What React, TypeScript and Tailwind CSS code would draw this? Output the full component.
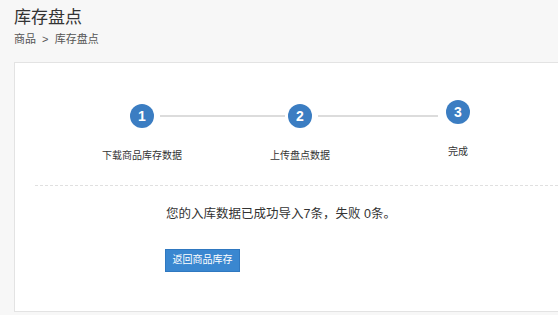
import React from "react";

export default function App() {
  const font = { fontFamily: '"Liberation Sans", "Noto Sans CJK SC", sans-serif' };
  return (
    <div
      className="w-[558px] h-[315px] overflow-hidden bg-[#f7f7f7] text-[#333]"
      style={font}
    >
      <div className="pl-[14px] pt-[6px]">
        <div className="text-[17px] leading-[24px] text-[#333]">库存盘点</div>
        <div className="mt-[2px] text-[11px] leading-[14px] text-[#555]">商品&nbsp; &gt; &nbsp;库存盘点</div>
      </div>
      <div className="ml-[14px] mt-[16px] w-[560px] h-[250px] bg-white border border-[#e3e3e3]">
        <div className="pt-[37px] pl-[115px] flex items-center">
          <div className="w-[24px] h-[24px] rounded-full bg-[#3b7dc2] text-white flex items-center justify-center text-[14px] font-bold">1</div>
          <div className="ml-[6px] mr-[3px] w-[125px] h-[2px] bg-[#dcdcdc]" />
          <div className="w-[24px] h-[24px] rounded-full bg-[#3b7dc2] text-white flex items-center justify-center text-[14px] font-bold">2</div>
          <div className="ml-[6px] mr-[8px] w-[120px] h-[2px] bg-[#dcdcdc] mb-[1px]" />
          <div className="w-[24px] h-[24px] rounded-full bg-[#3b7dc2] text-white flex items-center justify-center text-[14px] font-bold mb-[8px]">3</div>
        </div>
        <div className="mt-[17px] pl-[48px] flex items-start text-[10px] leading-[14px] text-[#333]">
          <div className="w-[158px] text-center">下载商品库存数据</div>
          <div className="w-[158px] text-center">上传盘点数据</div>
          <div className="w-[158px] text-center -mt-[4px]">完成</div>
        </div>
        <div className="mt-[22px] ml-[20px] border-t border-dashed border-[#e0e0e0]" />
        <div className="mt-[19px] pl-[151px] text-[12.5px] leading-[18px] text-[#333]">
          您的入库数据已成功导入7条，失败 0条。
        </div>
        <div className="mt-[23px] pl-[150px]">
          <button className="w-[75px] h-[23px] bg-[#3a87d0] border border-[#2f78c0] text-white text-[10px] leading-[20px]">
            返回商品库存
          </button>
        </div>
      </div>
    </div>
  );
}
